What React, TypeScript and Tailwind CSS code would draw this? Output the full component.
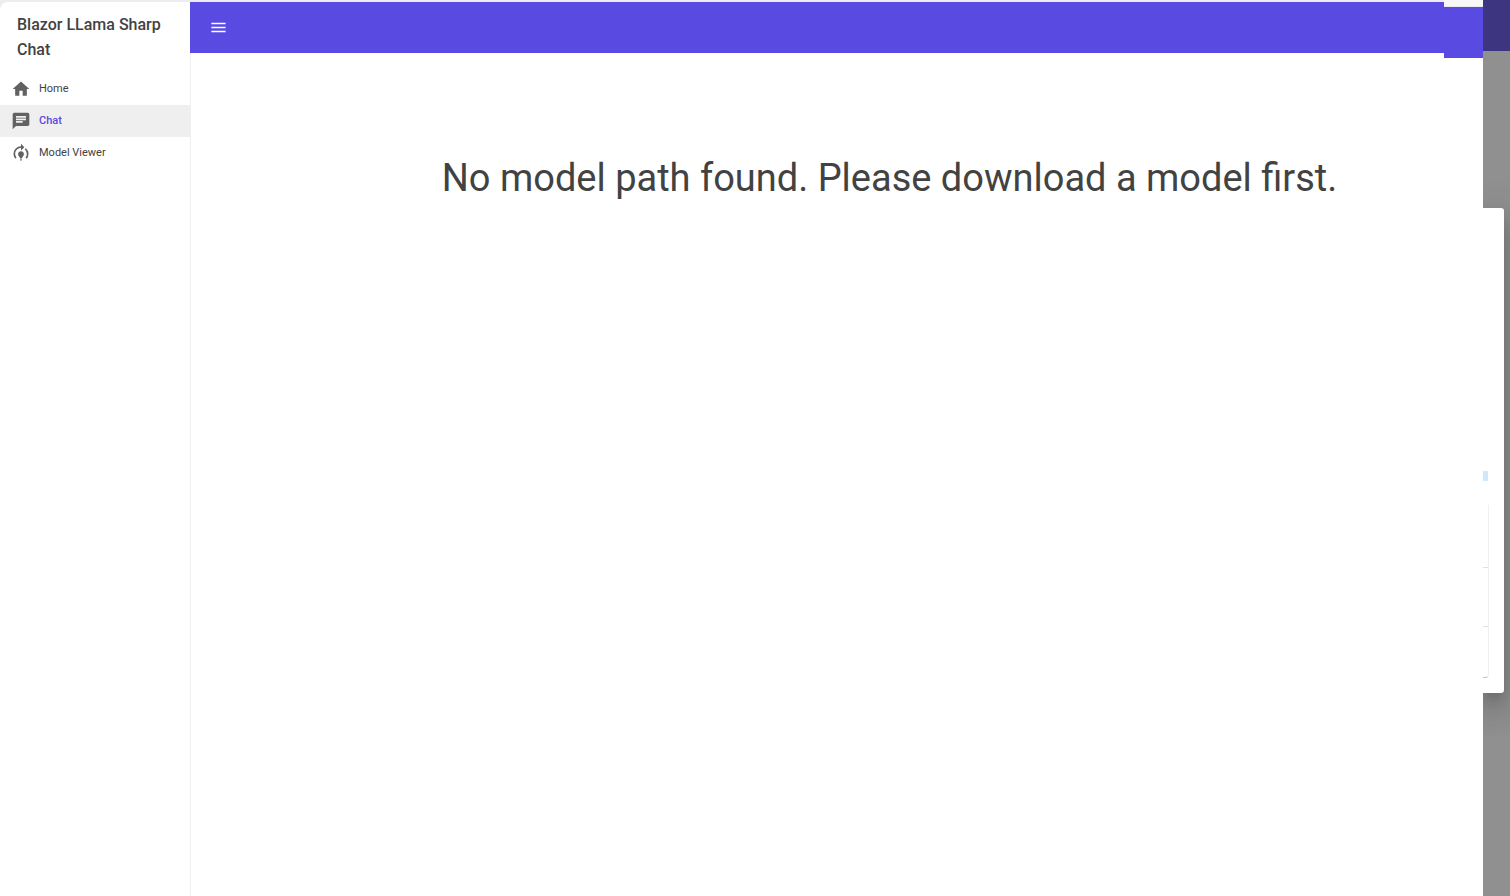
import React from "react";
import type { IconType } from "react-icons";
import { MdChat, MdHome, MdMenu, MdModelTraining } from "react-icons/md";

type NavItem = { label: string; icon: IconType; active?: boolean };

const items: NavItem[] = [
  { label: "Home", icon: MdHome },
  { label: "Chat", icon: MdChat, active: true },
  { label: "Model Viewer", icon: MdModelTraining },
];

function Sidebar() {
  return (
    <aside className="w-[191px] shrink-0 rounded-tl-lg border-r border-[#f0f0f0] bg-white">
      <h2 className="px-[17px] pt-[10px] pb-[11px] text-base leading-[25px] font-medium">
        Blazor LLama Sharp Chat
      </h2>
      <nav>
        {items.map(({ label, icon: Icon, active }) => (
          <a
            key={label}
            href="#"
            aria-current={active ? "page" : undefined}
            className={
              active
                ? "flex h-8 items-center gap-2 bg-[#efefef] px-[11px] text-[11px] font-medium text-[#594ae2]"
                : "flex h-8 items-center gap-2 px-[11px] text-[11px] text-[#424242]"
            }
          >
            <Icon className="size-5 text-[#616161]" />
            {label}
          </a>
        ))}
      </nav>
    </aside>
  );
}

function DialogPage() {
  return (
    <div className="flex w-[27px] shrink-0 flex-col overflow-hidden bg-[#909090]">
      <div className="h-[51px] bg-[#3e3580]" />
      <div className="mt-[157px] mr-[6px] h-[485px] rounded-r-[3px] bg-white pt-[263px] shadow-[0_9px_12px_-5px_rgba(0,0,0,0.2),0_18px_29px_2px_rgba(0,0,0,0.14),0_7px_37px_6px_rgba(0,0,0,0.12)]">
        <div className="h-[10px] w-[5px] bg-[#cfe8fd]" />
        <div className="mt-[22px] h-[175px] w-[6px] rounded-r-[4px] border-r border-b border-r-[#f0f0f0] border-b-[#c4c4c4]">
          <div className="h-[65px] border-b border-[#e0e0e0]" />
          <div className="h-[59px] border-b border-[#e0e0e0]" />
        </div>
      </div>
    </div>
  );
}

export default function App() {
  return (
    <div className="flex min-h-screen bg-white font-['Roboto',sans-serif] text-[#424242]">
      <div className="flex min-w-0 flex-1 flex-col">
        <div className="h-[2px] bg-[#ededf0]" />
        <div className="flex flex-1 bg-[#ededf0]">
          <Sidebar />
          <div className="-ml-px flex min-w-0 flex-1 flex-col">
            <header className="flex h-[51px] items-center bg-[#594ae2] px-[19px]">
              <button type="button" aria-label="Toggle menu" className="text-white">
                <MdMenu className="size-[19px]" />
              </button>
            </header>
            <main className="flex-1 border-l border-[#f0f0f0] bg-white pt-[100px] pl-36">
              <h1 className="text-center text-[38px] leading-[50px] font-normal">
                No model path found. Please download a model first.
              </h1>
            </main>
          </div>
        </div>
      </div>
      <div className="w-[39px] shrink-0">
        <div className="h-[7px] border-b border-[#ebebeb] bg-[#f7f7f7]" />
        <div className="h-[51px] bg-[#594ae2]" />
      </div>
      <DialogPage />
    </div>
  );
}
